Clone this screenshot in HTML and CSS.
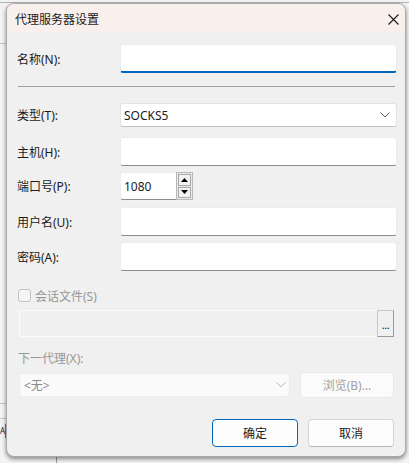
FILE: index.html
```html
<!DOCTYPE html>
<html lang="zh-CN">
<head>
<meta charset="utf-8">
<title>代理服务器设置</title>
<link rel="stylesheet" href="styles.css">
</head>
<body>
<div class="bg-cell">A</div>
<div class="dialog">
  <div class="titlebar">
    <span class="title">代理服务器设置</span>
    <svg class="close" width="11" height="11" viewBox="0 0 11 11"><path d="M0.5 0.5 L10.5 10.5 M10.5 0.5 L0.5 10.5" stroke="#1a1a1a" stroke-width="1.1" fill="none"/></svg>
  </div>
  <div class="content">
    <div class="row r-name">
      <span class="lbl">名称(N):</span>
      <div class="field input focused"></div>
    </div>
    <div class="sep"></div>
    <div class="row r-type">
      <span class="lbl">类型(T):</span>
      <div class="field select">
        <span class="val">SOCKS5</span>
        <svg class="chev" width="10" height="6" viewBox="0 0 10 6"><path d="M0.5 0.5 L5 5 L9.5 0.5" stroke="#606060" stroke-width="1" fill="none"/></svg>
      </div>
    </div>
    <div class="row r-host">
      <span class="lbl">主机(H):</span>
      <div class="field input"></div>
    </div>
    <div class="row r-port">
      <span class="lbl">端口号(P):</span>
      <div class="port-wrap">
        <div class="input port"><span class="val">1080</span></div>
        <div class="spin">
          <div class="spin-btn"><svg width="7" height="4" viewBox="0 0 7 4"><path d="M0 4 L3.5 0 L7 4 Z" fill="#000"/></svg></div>
          <div class="spin-btn"><svg width="7" height="4" viewBox="0 0 7 4"><path d="M0 0 L3.5 4 L7 0 Z" fill="#000"/></svg></div>
        </div>
      </div>
    </div>
    <div class="row r-user">
      <span class="lbl">用户名(U):</span>
      <div class="field input"></div>
    </div>
    <div class="row r-pass">
      <span class="lbl">密码(A):</span>
      <div class="field input"></div>
    </div>
    <div class="check-row">
      <span class="checkbox"></span>
      <span class="disabled-text">会话文件(S)</span>
    </div>
    <div class="file-row">
      <div class="file-box"></div>
      <div class="dots">...</div>
    </div>
    <div class="next-label disabled-text">下一代理(X):</div>
    <div class="next-row">
      <div class="combo">
        <span class="combo-val">&lt;无&gt;</span>
        <svg class="chev" width="10" height="6" viewBox="0 0 10 6"><path d="M0.5 0.5 L5 5 L9.5 0.5" stroke="#b8b8b8" stroke-width="1" fill="none"/></svg>
      </div>
      <div class="browse">浏览(B)...</div>
    </div>
    <div class="buttons">
      <div class="btn primary">确定</div>
      <div class="btn">取消</div>
    </div>
  </div>
</div>
</body>
</html>
```

FILE: styles.css
```css
* { box-sizing: border-box; }

html, body { height: 100%; }

body {
  margin: 0;
  padding: 3px 0 0 6px;
  overflow: hidden;
  position: relative;
  font-family: "Noto Sans", "Noto Sans CJK SC", sans-serif;
  font-size: 12px;
  color: #1b1b1b;
  background-color: #f3f3f3;
  background-image:
    linear-gradient(#b4b4b4, #b4b4b4),
    linear-gradient(#c8c8c8, #c8c8c8),
    linear-gradient(#c8c8c8, #c8c8c8),
    linear-gradient(#c8c8c8, #c8c8c8),
    linear-gradient(#9a9a9a, #9a9a9a);
  background-repeat: no-repeat;
  background-size: 100% 1px, 6px 1px, 6px 1px, 6px 1px, 1px 10px;
  background-position: 0 2px, 0 43px, 0 403px, 0 418px, 56px 456px;
}

.bg-cell {
  position: absolute;
  left: 0;
  top: 424px;
  font-size: 8px;
  color: #222;
  border-right: 1px solid #3b7fd0;
  line-height: 14px;
}

.dialog {
  position: relative;
  width: 400px;
  height: 454px;
  background: #f0f0f0;
  border: 1px solid #a9a9a9;
  border-radius: 8px;
  overflow: hidden;
  box-shadow: 0 2px 4px rgba(0, 0, 0, 0.45);
}

.titlebar {
  height: 29px;
  background: #f9efed;
  display: flex;
  align-items: center;
  justify-content: space-between;
  padding: 0 6px 0 8px;
}

.title {
  font-size: 12px;
  color: #1a1a1a;
}

.close { display: block; margin-top: 1px; }

.content {
  padding: 11px 8px 0 10px;
  display: flex;
  flex-direction: column;
}

.row {
  display: flex;
  align-items: center;
}

.lbl {
  width: 103px;
  flex: none;
  color: #1b1b1b;
}

.field {
  width: 277px;
  flex: none;
}

.input {
  background: #ffffff;
  border: 1px solid #ececec;
  border-bottom: 1px solid #8d8d8d;
  border-radius: 3px;
  display: flex;
  align-items: center;
  padding-left: 3px;
}

.input.focused {
  border-bottom: 2px solid #0067c0;
}

.val { font-size: 12px; color: #1b1b1b; }

.r-name { height: 29px; }
.r-name .input { height: 29px; }

.sep {
  margin: 13px 2px 0 1px;
  height: 1px;
  background: #a0a0a0;
}

.r-type { margin-top: 16px; height: 24px; }
.select {
  height: 24px;
  background: #ffffff;
  border: 1px solid #e3e3e3;
  border-bottom-color: #c4c4c4;
  border-radius: 3px;
  display: flex;
  align-items: center;
  justify-content: space-between;
  padding: 0 6px 0 3px;
}
.chev { display: block; }

.r-host { margin-top: 10px; height: 29px; }
.r-host .input { height: 29px; }

.r-port { margin-top: 6px; height: 28px; }
.port-wrap { display: flex; height: 28px; }
.input.port {
  width: 56px;
  height: 28px;
  border-radius: 3px 0 0 3px;
  border-right: none;
}
.spin {
  width: 17px;
  height: 28px;
  display: flex;
  flex-direction: column;
  border: 1px solid #b8b8b8;
  background: #e9e9e9;
  padding: 1px;
  gap: 1px;
}
.spin-btn {
  flex: 1;
  background: #f2f2f2;
  border: 1px solid #a8a8a8;
  display: flex;
  align-items: center;
  justify-content: center;
}
.spin-btn svg { display: block; }

.r-user { margin-top: 7px; height: 29px; }
.r-user .input { height: 29px; }
.r-pass { margin-top: 6px; height: 29px; }
.r-pass .input { height: 29px; }

.check-row {
  margin-top: 18px;
  height: 13px;
  display: flex;
  align-items: center;
  padding-left: 1px;
}
.checkbox {
  width: 13px;
  height: 13px;
  border: 1px solid #c2c2c2;
  border-radius: 3px;
  background: #f5f5f5;
  margin-right: 4px;
  flex: none;
}
.disabled-text { color: #979797; }

.file-row {
  margin: 8px 0 0 2px;
  width: 375px;
  height: 27px;
  display: flex;
  border: 1px solid #fbfbfb;
  border-right: none;
  background: #f0f0f0;
}
.file-box { flex: 1; }
.dots {
  width: 17px;
  height: 27px;
  margin-top: -1px;
  border: 1px solid #c8c8c8;
  border-right-color: #9a9a9a;
  border-bottom-color: #9a9a9a;
  background: #f0f0f0;
  color: #1b1b1b;
  font-size: 11px;
  line-height: 11px;
  display: flex;
  align-items: flex-end;
  justify-content: center;
  padding-bottom: 6px;
  letter-spacing: -0.5px;
}

.next-label {
  margin-top: 15px;
  height: 14px;
  line-height: 14px;
  padding-left: 1px;
}

.next-row {
  margin: 6px 0 0 2px;
  height: 26px;
  display: flex;
  align-items: center;
  gap: 10px;
}
.combo {
  width: 271px;
  height: 24px;
  background: #fafafa;
  border: 1px solid #ececec;
  border-radius: 3px;
  display: flex;
  align-items: center;
  justify-content: space-between;
  padding: 0 3px 0 4px;
}
.combo-val { color: #8a8a8a; }
.browse {
  width: 94px;
  height: 26px;
  background: #fbfbfb;
  border: 1px solid #e8e8e8;
  border-radius: 4px;
  color: #a2a2a2;
  display: flex;
  align-items: center;
  justify-content: center;
}

.buttons {
  margin: 21px 3px 0 0;
  display: flex;
  justify-content: flex-end;
  gap: 10px;
}
.btn {
  width: 86px;
  height: 28px;
  background: #fdfdfd;
  border: 1px solid #d4d4d4;
  border-bottom-color: #b6b6b6;
  border-radius: 4px;
  display: flex;
  align-items: center;
  justify-content: center;
  color: #1b1b1b;
}
.btn.primary {
  border: 1px solid #0067c0;
  box-shadow: inset 0 0 0 1px #ffffff;
}
```
